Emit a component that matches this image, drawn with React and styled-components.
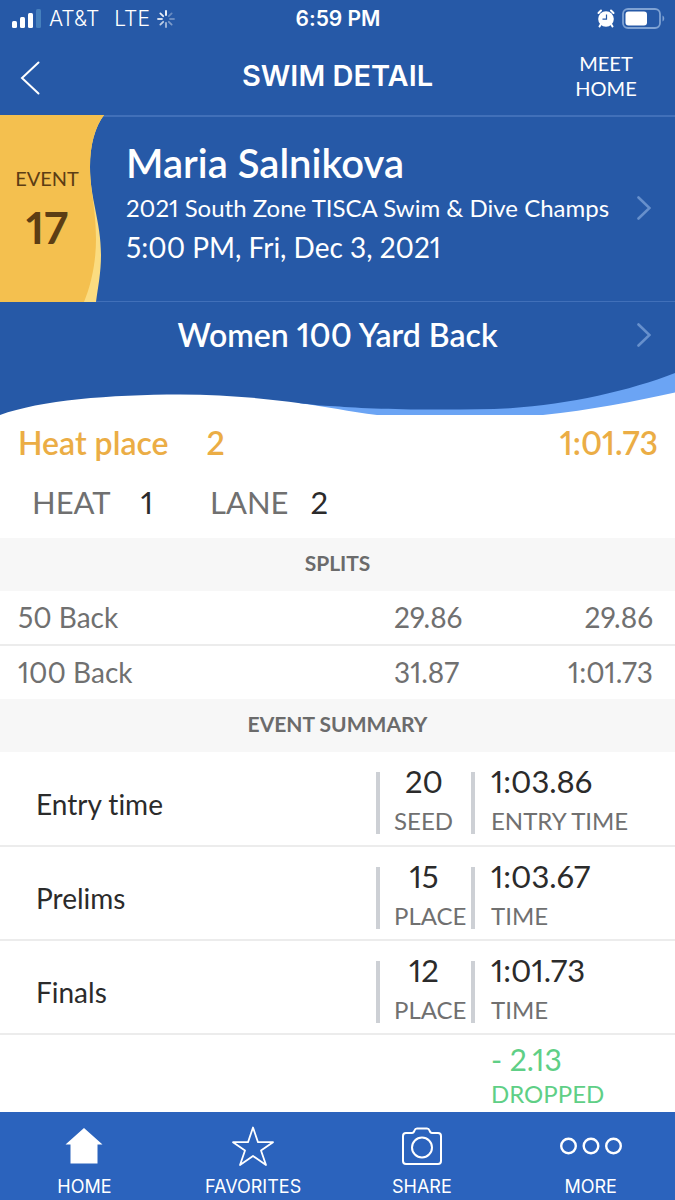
import styled, { createGlobalStyle } from "styled-components";

const GlobalStyle = createGlobalStyle`
  * {
    box-sizing: border-box;
  }

  body {
    margin: 0;
    background: #ffffff;
    font-family: Lato, "Open Sans", sans-serif;
    font-variant-ligatures: none;
    font-variant-numeric: proportional-nums;
    color: #2b2b2b;
  }

  button {
    background: none;
    border: 0;
    padding: 0;
    font: inherit;
    font-variant-ligatures: none;
    font-variant-numeric: proportional-nums;
    color: inherit;
    cursor: pointer;
  }

  svg {
    display: block;
  }
`;

const Page = styled.div`
  min-height: 100vh;
  display: flex;
  flex-direction: column;
`;

const Top = styled.header`
  background: #2659a7;
  color: #ffffff;
`;

const StatusBar = styled.div`
  display: grid;
  grid-template-columns: 1fr auto 1fr;
  align-items: center;
  height: 37px;
  padding: 0 10px 0 11px;
  font-family: Inter, sans-serif;
  font-size: 21px;
  line-height: 36px;
`;

const StatusGroup = styled.div`
  display: flex;
  align-items: center;
  justify-content: ${(props) => (props.$end ? "flex-end" : "flex-start")};
  gap: 7px;
`;

const Carrier = styled.span`
  font-weight: 300;
`;

const Network = styled(Carrier)`
  padding-left: 8px;
`;

const Clock = styled.span`
  font-weight: 600;
`;

const NavBar = styled.nav`
  display: grid;
  grid-template-columns: 138px 1fr 138px;
  align-items: center;
  height: 78px;
`;

const BackButton = styled.button`
  && {
    padding: 4px 0 0 20px;
    justify-self: start;
  }
`;

const NavTitle = styled.h1`
  margin: 0;
  text-align: center;
  font-family: Inter, sans-serif;
  font-size: 29px;
  font-weight: 600;
  line-height: 36px;
`;

const MeetHome = styled.button`
  && {
    font-size: 20px;
    line-height: 25px;
  }
`;

const EventBlock = styled.section`
  display: flex;
  height: 187px;
`;

const EventBadge = styled.div`
  display: grid;
  width: 104px;
  margin-right: -8px;
  flex: none;
  z-index: 1;

  > * {
    grid-area: 1 / 1;
  }
`;

const EventText = styled.div`
  width: 94px;
  padding-top: 50px;
  text-align: center;
  color: #5c3d14;
`;

const EventLabel = styled.div`
  font-size: 20px;
  line-height: 26px;
`;

const EventNumber = styled.div`
  padding-top: 12px;
  font-size: 44px;
  font-weight: 700;
  line-height: 48px;
`;

const EventInfo = styled.div`
  flex: 1;
  padding: 23px 24px 0 30px;
  border-top: 2px solid #4170b9;
  border-bottom: 1px solid #4170b9;
`;

const Swimmer = styled.h2`
  margin: 0;
  font-size: 40px;
  font-weight: 600;
  line-height: 46px;
`;

const MeetLink = styled.button`
  && {
    display: flex;
    align-items: center;
    justify-content: space-between;
    width: 100%;
    font-size: 24px;
    line-height: 44px;
    white-space: nowrap;
  }
`;

const EventDate = styled.div`
  font-size: 28px;
  line-height: 34px;
`;

const RaceLink = styled.button`
  && {
    display: grid;
    grid-template-columns: 14px 1fr 14px;
    align-items: center;
    width: 100%;
    height: 71px;
    padding: 0 24px 6px;
    font-size: 32px;
    font-weight: 600;
  }
`;

const RaceName = styled.span`
  grid-column: 2;
`;

const Wave = styled.svg`
  width: 100%;
  height: 42px;
  background: #ffffff;
`;

const HeatPlace = styled.div`
  display: flex;
  padding: 8px 17px 0 18px;
  color: #ebad45;
  font-size: 32px;
  font-weight: 600;
  line-height: 40px;
`;

const HeatPlaceValue = styled.span`
  padding-left: 38px;
`;

const HeatTime = styled.span`
  margin-left: auto;
`;

const HeatLane = styled.div`
  display: flex;
  padding: 19px 32px 16px;
  font-size: 31px;
  line-height: 40px;
`;

const HeatLaneItem = styled.div`
  display: flex;
  gap: ${(props) => props.$gap};
  width: 178px;
`;

const Muted = styled.span`
  color: #707070;
`;

const SectionTitle = styled.h3`
  margin: 0;
  background: #f7f7f7;
  color: #6b6b6b;
  text-align: center;
  font-size: 21px;
  font-weight: 700;
  line-height: 49px;
  padding-bottom: 4px;
`;

const Table = styled.table`
  width: 100%;
  table-layout: fixed;
  border-collapse: collapse;
`;

const SplitRow = styled.tr`
  height: 54px;
  color: #707070;
  font-size: 28px;

  & + & {
    border-top: 2px solid #ececec;
  }
`;

const SplitName = styled.th`
  padding: 0 0 2px 18px;
  text-align: left;
  font-weight: 400;
`;

const SplitTime = styled.td`
  width: ${(props) => (props.$total ? "140px" : "141px")};
  padding: 0 ${(props) => (props.$total ? "22px" : "0")} 2px 0;
  text-align: ${(props) => (props.$total ? "right" : "left")};
`;

const SummaryRow = styled.tr`
  height: ${(props) => (props.$last ? "78px" : "94px")};
  border-bottom: ${(props) => (props.$last ? "0" : "2px solid #ececec")};
`;

const SummaryName = styled.th`
  padding: 10px 0 0 36px;
  text-align: left;
  font-size: 28px;
  font-weight: 400;
`;

const SummaryCell = styled.td`
  width: ${(props) => (props.$wide ? "204px" : "95px")};
  padding: 0;
`;

const Stat = styled.div`
  display: flex;
  align-items: center;
  height: 62px;
  margin-top: 9px;
  padding-left: ${(props) => (props.$wide ? "16px" : "14px")};
  border-left: 4px solid #cdd0d5;
`;

const StatText = styled.div`
  width: ${(props) => (props.$wide ? "auto" : "60px")};
  text-align: ${(props) => (props.$wide ? "left" : "center")};
  white-space: nowrap;
  margin-top: -4px;
`;

const StatValue = styled.div`
  font-size: 31px;
  line-height: 40px;
`;

const StatLabel = styled.div`
  color: #707070;
  text-align: left;
  font-size: 24px;
  line-height: 40px;
`;

const Dropped = styled.div`
  padding: 4px 0 0 20px;
  color: #5fcf86;
  font-size: 24px;
  line-height: 34px;
`;

const DroppedTime = styled.div`
  font-size: 30px;
  line-height: 36px;
`;

const TabBar = styled.nav`
  display: grid;
  grid-template-columns: repeat(4, 1fr);
  height: 88px;
  margin-top: auto;
  background: #2b63bd;
  color: #ffffff;
`;

const Tab = styled.button`
  && {
    display: flex;
    flex-direction: column;
    align-items: center;
    padding-top: 12px;
    font-family: Inter, sans-serif;
    font-size: 18px;
    line-height: 24px;
  }
`;

const TabIcon = styled.span`
  display: flex;
  align-items: center;
  height: 44px;
  margin-bottom: 7px;
`;

const splits = [
  { name: "50 Back", split: "29.86", total: "29.86" },
  { name: "100 Back", split: "31.87", total: "1:01.73" },
];

const summary = [
  { name: "Entry time", rank: "20", rankLabel: "SEED", time: "1:03.86", timeLabel: "ENTRY TIME" },
  { name: "Prelims", rank: "15", rankLabel: "PLACE", time: "1:03.67", timeLabel: "TIME" },
  { name: "Finals", rank: "12", rankLabel: "PLACE", time: "1:01.73", timeLabel: "TIME" },
];

const SignalIcon = () => (
  <svg width="31" height="20" viewBox="0 0 31 20" fill="#ffffff">
    <rect x="1" y="12" width="5" height="7" rx="1.5" />
    <rect x="9" y="8" width="5" height="11" rx="1.5" />
    <rect x="17" y="4" width="5" height="15" rx="1.5" />
    <rect x="25" y="0" width="5" height="19" rx="1.5" fill="#4680bd" />
  </svg>
);

const SpinnerIcon = () => (
  <svg width="18" height="18" viewBox="0 0 18 18" stroke="#ffffff" strokeWidth="1.8" strokeLinecap="round">
    {[1, 0.3, 0.3, 0.4, 0.6, 0.7, 0.8, 0.9].map((opacity, i) => (
      <line key={i} x1="9" y1="1" x2="9" y2="5" opacity={opacity} transform={`rotate(${i * 45} 9 9)`} />
    ))}
  </svg>
);

const AlarmIcon = () => (
  <svg width="18" height="19" viewBox="0 0 18 19" fill="none">
    <path d="M1.5 4L4 1.5M16.5 4L14 1.5" stroke="#ffffff" strokeWidth="2" strokeLinecap="round" />
    <path d="M4 15L2.5 17.5M14 15L15.5 17.5" stroke="#ffffff" strokeWidth="2" strokeLinecap="round" />
    <circle cx="9" cy="10" r="7.8" fill="#ffffff" />
    <path d="M9.5 5.5V10.2H5.5" stroke="#2659a7" strokeWidth="1.2" />
  </svg>
);

const BatteryIcon = () => (
  <svg width="43" height="21" viewBox="0 0 43 21" fill="none">
    <rect x="1" y="1" width="37" height="19" rx="5" stroke="#7fa2d3" strokeWidth="1.8" />
    <rect x="3.5" y="3.5" width="21.5" height="14" rx="3" fill="#ffffff" />
    <path d="M40.5 7.5C42.8 8.5 42.8 12.5 40.5 13.5Z" fill="#7fa2d3" />
  </svg>
);

const Chevron = () => (
  <svg width="14" height="24" viewBox="0 0 14 24" fill="none">
    <path d="M1.5 1.5L12.5 12L1.5 22.5" stroke="#6790cc" strokeWidth="2.6" strokeLinecap="round" />
  </svg>
);

const App = () => {
  return (
    <Page>
      <GlobalStyle />
      <Top>
        <StatusBar>
          <StatusGroup>
            <SignalIcon />
            <Carrier>AT&amp;T</Carrier>
            <Network>LTE</Network>
            <SpinnerIcon />
          </StatusGroup>
          <Clock>6:59 PM</Clock>
          <StatusGroup $end>
            <AlarmIcon />
            <BatteryIcon />
          </StatusGroup>
        </StatusBar>

        <NavBar>
          <BackButton aria-label="Back">
            <svg width="20" height="34" viewBox="0 0 20 34" fill="none">
              <path d="M18.5 1.5L2 17L18.5 32.5" stroke="#ffffff" strokeWidth="2" strokeLinecap="round" />
            </svg>
          </BackButton>
          <NavTitle>SWIM DETAIL</NavTitle>
          <MeetHome>
            MEET
            <br />
            HOME
          </MeetHome>
        </NavBar>

        <EventBlock>
          <EventBadge>
            <svg width="104" height="187" viewBox="0 0 104 187">
              <path d="M0 0H104C95 12 90 30 90 52C90 84 101 106 101 140C101 158 98 172 96 187H0Z" fill="#fbdc80" />
              <path d="M0 0H104C95 12 90 30 90 52C90 76 96 92 96 124C96 148 91 170 84 187H0Z" fill="#f4c04f" />
            </svg>
            <EventText>
              <EventLabel>EVENT</EventLabel>
              <EventNumber>17</EventNumber>
            </EventText>
          </EventBadge>
          <EventInfo>
            <Swimmer>Maria Salnikova</Swimmer>
            <MeetLink>
              2021 South Zone TISCA Swim &amp; Dive Champs
              <Chevron />
            </MeetLink>
            <EventDate>5:00 PM, Fri, Dec 3, 2021</EventDate>
          </EventInfo>
        </EventBlock>

        <RaceLink>
          <RaceName>Women 100 Yard Back</RaceName>
          <Chevron />
        </RaceLink>

        <Wave viewBox="0 0 675 43" preserveAspectRatio="none">
          <path d="M300 31C325 34 350 40 377 43H543C590 38 635 29 675 20V0H300Z" fill="#6ba4f4" />
          <path
            d="M0 0H675C630 18 570 32 510 36C450 39 370 37 335 34C320 34 310 32 300 31C265 26 225 22 180 22C110 22 40 28 0 43Z"
            fill="#2659a7"
          />
        </Wave>
      </Top>

      <main>
        <HeatPlace>
          <span>Heat place</span>
          <HeatPlaceValue>2</HeatPlaceValue>
          <HeatTime>1:01.73</HeatTime>
        </HeatPlace>
        <HeatLane>
          <HeatLaneItem $gap="30px">
            <Muted>HEAT</Muted>
            <span>1</span>
          </HeatLaneItem>
          <HeatLaneItem $gap="22px">
            <Muted>LANE</Muted>
            <span>2</span>
          </HeatLaneItem>
        </HeatLane>

        <SectionTitle>SPLITS</SectionTitle>
        <Table>
          <tbody>
            {splits.map((item) => (
              <SplitRow key={item.name}>
                <SplitName scope="row">{item.name}</SplitName>
                <SplitTime>{item.split}</SplitTime>
                <SplitTime $total>{item.total}</SplitTime>
              </SplitRow>
            ))}
          </tbody>
        </Table>

        <SectionTitle>EVENT SUMMARY</SectionTitle>
        <Table>
          <tbody>
            {summary.map((item) => (
              <SummaryRow key={item.name}>
                <SummaryName scope="row">{item.name}</SummaryName>
                <SummaryCell>
                  <Stat>
                    <StatText>
                      <StatValue>{item.rank}</StatValue>
                      <StatLabel>{item.rankLabel}</StatLabel>
                    </StatText>
                  </Stat>
                </SummaryCell>
                <SummaryCell $wide>
                  <Stat $wide>
                    <StatText $wide>
                      <StatValue>{item.time}</StatValue>
                      <StatLabel>{item.timeLabel}</StatLabel>
                    </StatText>
                  </Stat>
                </SummaryCell>
              </SummaryRow>
            ))}
            <SummaryRow $last>
              <td colSpan={2} />
              <SummaryCell $wide>
                <Dropped>
                  <DroppedTime>- 2.13</DroppedTime>
                  DROPPED
                </Dropped>
              </SummaryCell>
            </SummaryRow>
          </tbody>
        </Table>
      </main>

      <TabBar>
        <Tab>
          <TabIcon>
            <svg width="38" height="36" viewBox="0 0 38 36" fill="#ffffff">
              <path d="M19 0L37.5 16.5H32.5V35.5H5.5V16.5H0.5Z" />
            </svg>
          </TabIcon>
          HOME
        </Tab>
        <Tab>
          <TabIcon>
            <svg width="42" height="40" viewBox="0 0 42 40" fill="none" stroke="#ffffff" strokeWidth="1.8">
              <path
                d="M21 1.5L26 16.2H41L29 24.5L34 39L21 30L8 39L13 24.5L1 16.2H16Z"
                strokeLinejoin="round"
              />
            </svg>
          </TabIcon>
          FAVORITES
        </Tab>
        <Tab>
          <TabIcon>
            <svg width="40" height="38" viewBox="0 0 40 38" fill="none" stroke="#ffffff" strokeWidth="2">
              <path d="M4 6H10C11.5 6 12 5 12.5 3.5C13 2 13.5 1.5 15 1.5H25C26.5 1.5 27 2 27.5 3.500C28 5 28.5 6 30 6H36C38 6 39 7 39 9V34C39 36 38 37 36 37H4C2 37 1 36 1 34V9C1 7 2 6 4 6Z" />
              <circle cx="20" cy="20.5" r="10" />
            </svg>
          </TabIcon>
          SHARE
        </Tab>
        <Tab>
          <TabIcon>
            <svg width="64" height="18" viewBox="0 0 64 18" fill="none" stroke="#ffffff" strokeWidth="2.4">
              <circle cx="9.5" cy="9" r="7.3" />
              <circle cx="32" cy="9" r="7.3" />
              <circle cx="54.5" cy="9" r="7.3" />
            </svg>
          </TabIcon>
          MORE
        </Tab>
      </TabBar>
    </Page>
  );
};

export default App;
